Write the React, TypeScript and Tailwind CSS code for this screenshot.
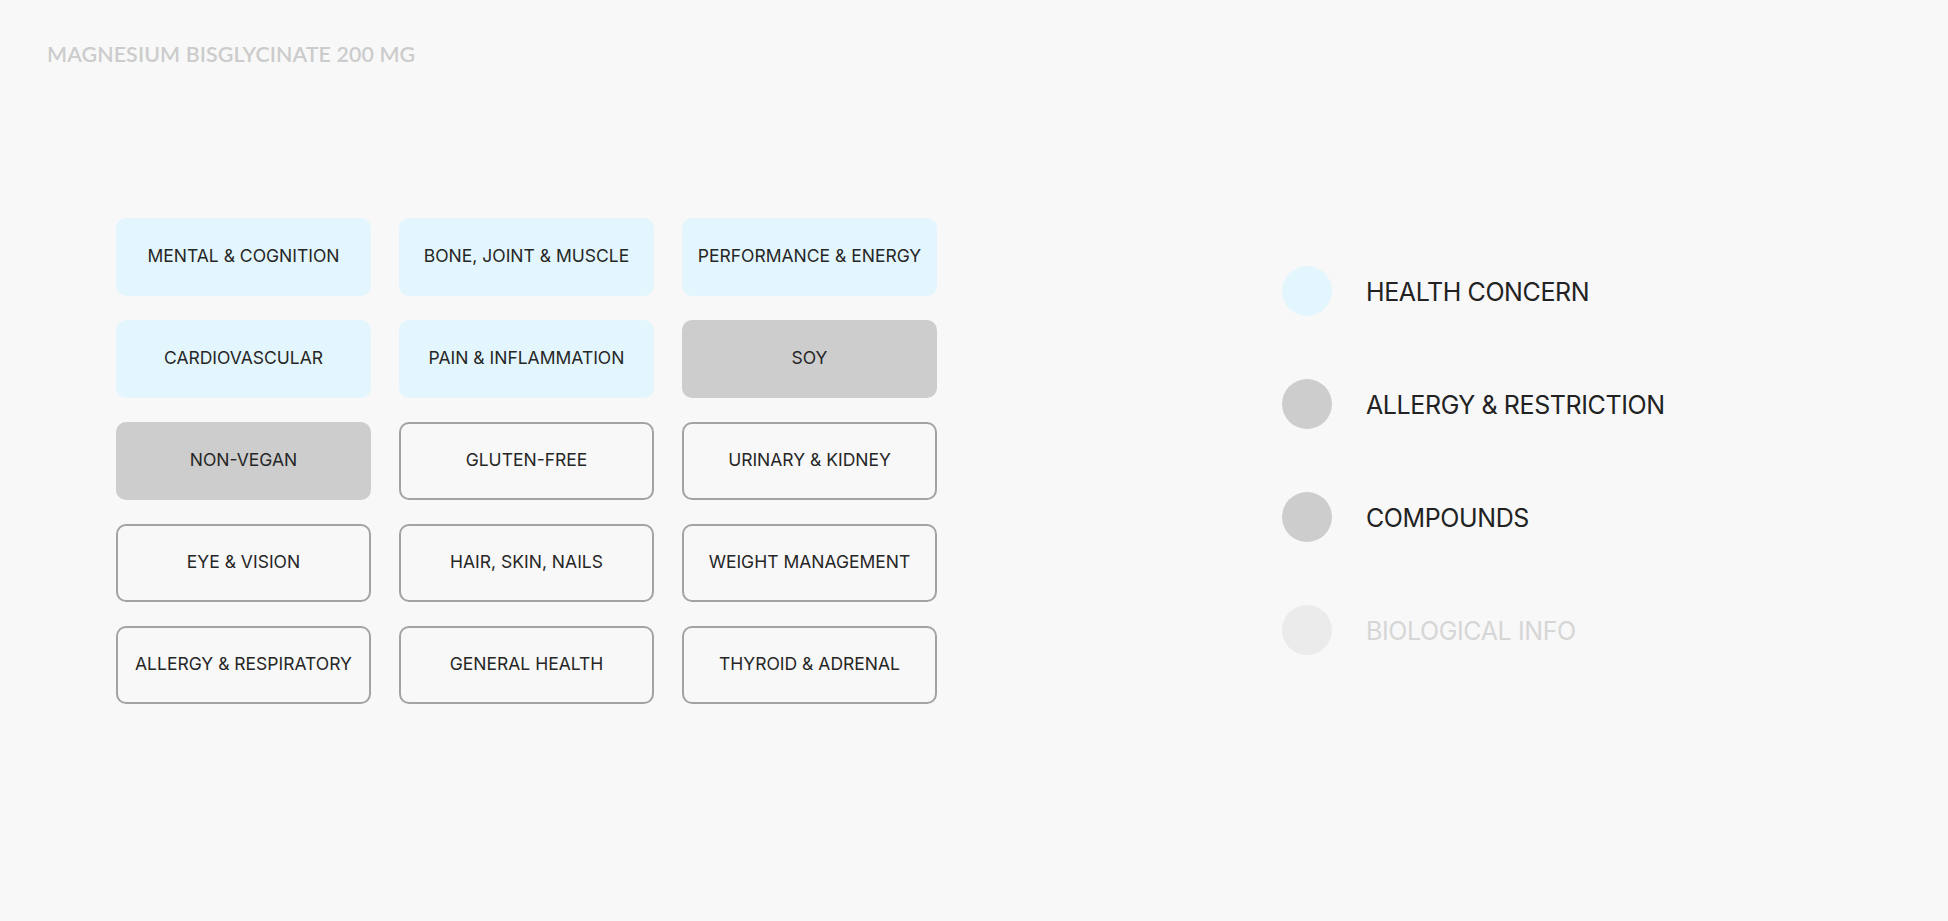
const cards: { label: string; kind: "health" | "allergy" | "plain" }[] = [
  { label: "MENTAL & COGNITION", kind: "health" },
  { label: "BONE, JOINT & MUSCLE", kind: "health" },
  { label: "PERFORMANCE & ENERGY", kind: "health" },
  { label: "CARDIOVASCULAR", kind: "health" },
  { label: "PAIN & INFLAMMATION", kind: "health" },
  { label: "SOY", kind: "allergy" },
  { label: "NON-VEGAN", kind: "allergy" },
  { label: "GLUTEN-FREE", kind: "plain" },
  { label: "URINARY & KIDNEY", kind: "plain" },
  { label: "EYE & VISION", kind: "plain" },
  { label: "HAIR, SKIN, NAILS", kind: "plain" },
  { label: "WEIGHT MANAGEMENT", kind: "plain" },
  { label: "ALLERGY & RESPIRATORY", kind: "plain" },
  { label: "GENERAL HEALTH", kind: "plain" },
  { label: "THYROID & ADRENAL", kind: "plain" },
];

const legend = [
  { label: "HEALTH CONCERN", dot: "bg-[#e3f6fd]", text: "text-[#222222]" },
  { label: "ALLERGY & RESTRICTION", dot: "bg-[#cdcdcd]", text: "text-[#222222]" },
  { label: "COMPOUNDS", dot: "bg-[#cdcdcd]", text: "text-[#222222]" },
  { label: "BIOLOGICAL INFO", dot: "bg-[#ebebeb]", text: "text-[#d6d6d6]" },
];

const kindClass = {
  health: "bg-[#e3f6fd] border-2 border-transparent",
  allergy: "bg-[#cdcdcd] border-2 border-transparent",
  plain: "bg-transparent border-2 border-[#a3a3a3]",
};

export default function App() {
  return (
    <div className="min-h-[921px] w-full bg-[#f8f8f8] font-['Inter',sans-serif]">
      {/* Product title */}
      <div className="px-[47px] pt-[41px]">
        <h1 className="font-['Lato',sans-serif] text-[21.4px] font-semibold leading-[26px] tracking-[0.1px] text-[#cccccc]">
          MAGNESIUM BISGLYCINATE 200 MG
        </h1>
      </div>

      <div className="flex items-start pl-[116px] pt-[151px]">
        {/* Tag grid */}
        <div className="grid grid-cols-[repeat(3,255px)] gap-x-[28px] gap-y-[24px]">
          {cards.map((c) => (
            <div
              key={c.label}
              className={`flex h-[78px] items-center justify-center rounded-[10px] pb-[1px] text-[17.5px] text-[#262626] ${kindClass[c.kind]}`}
            >
              {c.label}
            </div>
          ))}
        </div>

        {/* Legend */}
        <div className="ml-[345px] mt-[48px] flex flex-col gap-[63px]">
          {legend.map((l) => (
            <div key={l.label} className="flex items-center gap-[34px]">
              <span className={`h-[50px] w-[50px] rounded-full ${l.dot}`} />
              <span className={`pt-[3px] text-[25px] tracking-[-0.4px] ${l.text}`}>{l.label}</span>
            </div>
          ))}
        </div>
      </div>
    </div>
  );
}
